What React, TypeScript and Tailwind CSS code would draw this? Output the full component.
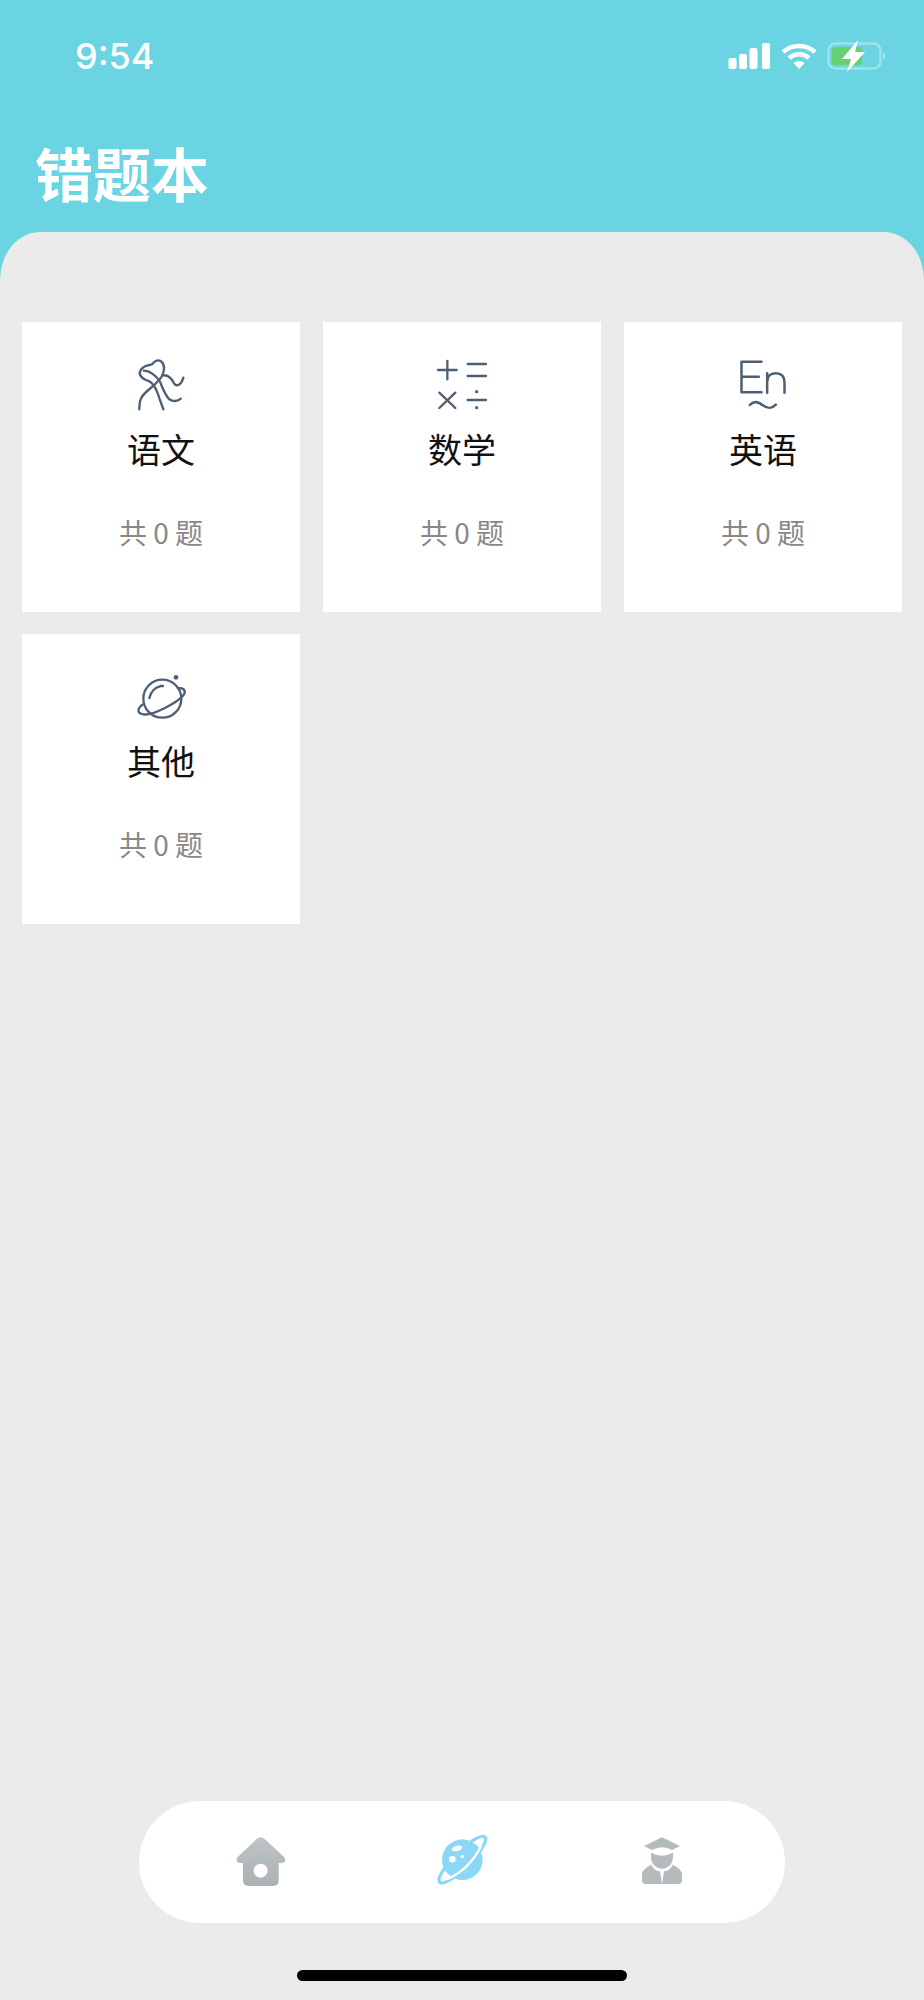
import React from "react";

const ink = "#4d5f75";
const cjk = { fontFamily: '"Noto Sans CJK SC", sans-serif' };

function Yuwen() {
  return (
    <svg width="60" height="60" viewBox="63 48 180 180" fill="none" stroke={ink} strokeWidth="7" strokeLinecap="round" strokeLinejoin="round">
      <path d="M88 208 C88 178 94 168 115 150 C130 138 145 125 155 110 C165 92 165 72 152 63 C140 57 132 66 126 73 C112 76 96 78 90 95 C86 108 100 118 118 124 C132 132 140 150 146 168 C150 182 156 196 160 208" />
      <path d="M102 92 C120 92 138 108 150 125 C158 145 165 165 178 178 C190 186 204 184 212 176" />
      <path d="M160 106 C178 104 186 118 192 130 C200 142 214 135 220 113" />
    </svg>
  );
}

function Shuxue() {
  return (
    <svg width="60" height="60" viewBox="96 48 180 180" fill="none" stroke={ink} strokeWidth="7" strokeLinecap="round">
      <path d="M114 90 H170 M142 63 V118 M203 72 H258 M203 108 H258 M118 158 L166 204 M166 158 L118 204 M203 180 H258" />
      <circle cx="230" cy="155" r="5" fill={ink} stroke="none" />
      <circle cx="230" cy="203" r="5" fill={ink} stroke="none" />
    </svg>
  );
}

function Yingyu() {
  return (
    <svg width="60" height="60" viewBox="97.5 48 180 180" fill="none" stroke={ink} strokeWidth="7.5" strokeLinecap="round" strokeLinejoin="round">
      <path d="M183 65 H123 V157 H183 M123 110 H175" />
      <path d="M200 100 V158 M200 125 C200 105 215 100 226 100 C244 100 252 110 252 128 V158" />
      <path d="M148 195 C160 182 175 186 187 196 C200 206 215 206 226 194" />
    </svg>
  );
}

function Qita() {
  return (
    <svg width="60" height="60" viewBox="63 24 180 180" fill="none" stroke={ink} strokeWidth="7" strokeLinecap="round">
      <circle cx="157" cy="116" r="57" />
      <path d="M118 114 C122 95 136 82 148 80 M152 78 H159" />
      <path d="M203 84 C222 84 230 92 220 106 C200 130 125 168 100 163 C82 160 80 148 97 134" />
      <circle cx="198" cy="52" r="7" fill={ink} stroke="none" />
    </svg>
  );
}

function Home() {
  return (
    <svg width="70" height="70" viewBox="21 24 210 210">
      <defs>
        <linearGradient id="homeFill" x1="0" y1="0" x2="0" y2="1">
          <stop offset="0" stopColor="#bdc5c6" />
          <stop offset="1" stopColor="#abb1b3" />
        </linearGradient>
      </defs>
      <path
        fillRule="evenodd"
        fill="url(#homeFill)"
        d="M110 60 Q122 50 134 60 L192 114 Q202 128 186 132 H176 V184 Q176 201 159 201 H86 Q69 201 69 184 V132 H59 Q43 128 53 114 Z M122 134 A21 21 0 1 0 122.01 176 A21 21 0 1 0 122 134 Z"
      />
    </svg>
  );
}

function Planet() {
  return (
    <svg width="70" height="70" viewBox="6 9 210 210" fill="none">
      <ellipse cx="112" cy="107" rx="96" ry="24" transform="rotate(-45 112 107)" stroke="#8bd8f6" strokeWidth="10" />
      <circle cx="112" cy="107" r="61" fill="#8bd8f6" />
      <path d="M64 166 C105 150 145 115 168 66" stroke="#ffffff" strokeWidth="7" />
      <ellipse cx="96" cy="73" rx="16" ry="8" transform="rotate(-15 96 73)" fill="#ffffff" />
      <circle cx="82" cy="106" r="10" fill="#ffffff" />
      <circle cx="112" cy="97" r="5" fill="#ffffff" />
    </svg>
  );
}

function Person() {
  return (
    <svg width="70" height="70" viewBox="-9 9 210 210" fill="#b4bbbc">
      <path d="M96 40 L150 66 L126 78 Q96 62 66 78 L42 66 Z" />
      <path d="M63 86 Q96 104 129 86 V100 Q127 132 96 134 Q65 132 63 100 Z" />
      <path d="M64 122 Q74 142 90 142 L96 180 H48 Q36 180 36 168 V150 Q38 134 64 122 Z" />
      <path d="M128 122 Q118 142 102 142 L96 180 H144 Q156 180 156 168 V150 Q154 134 128 122 Z" />
    </svg>
  );
}

function Signal() {
  return (
    <svg width="43" height="27" viewBox="0 0 43 27" fill="#ffffff">
      <rect x="0.5" y="15" width="8" height="11" rx="2" />
      <rect x="11" y="11" width="8" height="15" rx="2" />
      <rect x="21.5" y="5" width="8" height="21" rx="2" />
      <rect x="34" y="0" width="8" height="26" rx="2" />
    </svg>
  );
}

function Wifi() {
  return (
    <svg width="36" height="27" viewBox="0 0 36 27" fill="none" stroke="#ffffff" strokeWidth="4.5">
      <path d="M2 9 C11 1 25 1 34 9" />
      <path d="M8 15 C14 10 22 10 28 15" />
      <path d="M12.5 20 L18 26 L23.5 20 C20 17.5 16 17.5 12.5 20 Z" fill="#ffffff" stroke="none" />
    </svg>
  );
}

function Battery() {
  return (
    <svg width="60" height="32" viewBox="0 0 60 32">
      <rect x="1.5" y="3.5" width="52" height="25" rx="7" fill="none" stroke="#ffffff" strokeOpacity="0.35" strokeWidth="2.5" />
      <path d="M56 12 C58.5 13 58.5 19 56 20 Z" fill="#ffffff" fillOpacity="0.5" />
      <rect x="5" y="7" width="30" height="18" rx="3" fill="#66d171" />
      <path d="M31 0 L15 19 H24 L20 32 L38 12 H28 Z" fill="#ffffff" />
    </svg>
  );
}

const subjects = [
  { name: "语文", Icon: Yuwen },
  { name: "数学", Icon: Shuxue },
  { name: "英语", Icon: Yingyu },
  { name: "其他", Icon: Qita },
];

export default function App() {
  return (
    <div className="flex h-[2000px] w-[924px] flex-col overflow-hidden bg-[#6bd4e2]">
      <header className="h-[232px] shrink-0">
        <div className="flex h-[112px] items-center justify-between pl-[75px] pr-[37px]">
          <span className="text-[36px] font-medium leading-none text-white" style={{ fontFamily: 'Inter, sans-serif' }}>
            9:54
          </span>
          <div className="flex items-center gap-[10px]">
            <Signal />
            <Wifi />
            <Battery />
          </div>
        </div>
        <h1 className="mt-[25px] pl-[35px] text-[58px] font-bold leading-[70px] text-white" style={cjk}>
          错题本
        </h1>
      </header>

      <main className="flex min-h-0 flex-1 flex-col rounded-tl-[40px_48px] rounded-tr-[40px_48px] bg-[#ebebeb]">
        <div className="grid grid-cols-3 gap-x-[23px] gap-y-[22px] px-[22px] pt-[90px]">
          {subjects.map(({ name, Icon }) => (
            <div key={name} className="flex h-[290px] flex-col items-center bg-white pt-[34px]">
              <Icon />
              <div className="mt-[13px] text-[34px] leading-[40px] text-[#111111]" style={cjk}>
                {name}
              </div>
              <div className="mt-[43px] text-[28px] leading-[40px] text-[#888888]" style={cjk}>
                共 0 题
              </div>
            </div>
          ))}
        </div>

        <div className="mt-auto flex flex-col items-center pb-[19px]">
          <nav className="flex h-[122px] w-[646px] items-center justify-center gap-[130px] rounded-[61px] bg-white">
            <Home />
            <Planet />
            <Person />
          </nav>
          <div className="mt-[47px] h-[11px] w-[330px] rounded-full bg-black" />
        </div>
      </main>
    </div>
  );
}
